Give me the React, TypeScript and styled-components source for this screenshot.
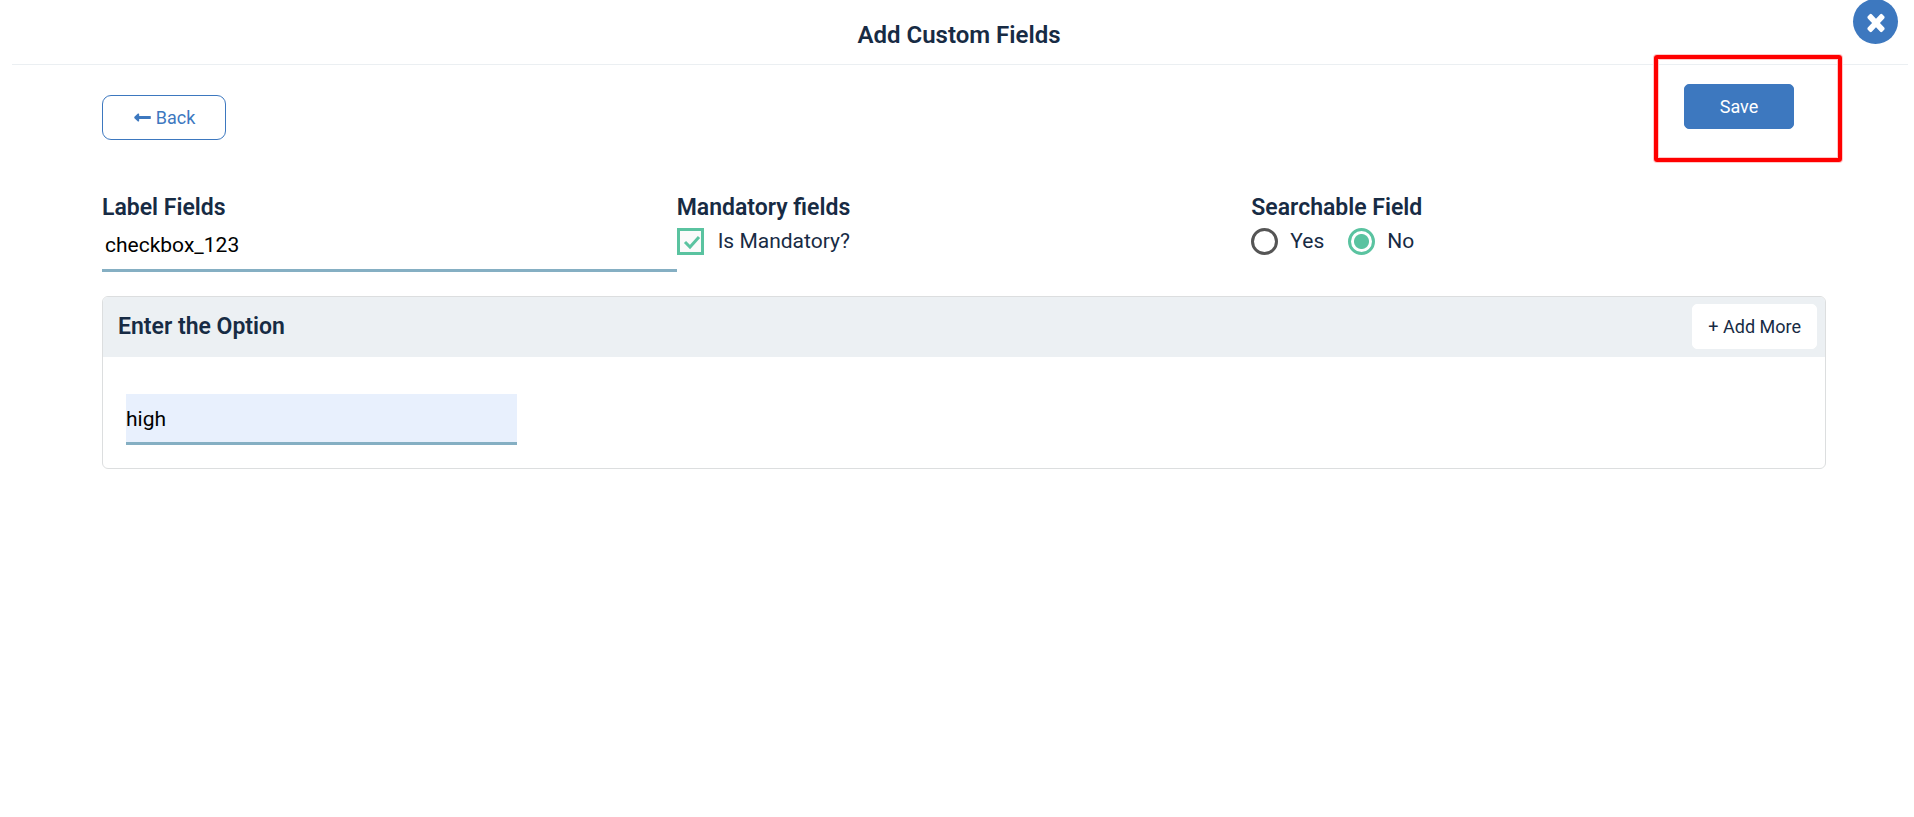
import React, { useState } from 'react';
import styled, { createGlobalStyle } from 'styled-components';
import { FaLongArrowAltLeft } from 'react-icons/fa';

const GlobalStyle = createGlobalStyle`
  * { box-sizing: border-box; }
  body {
    margin: 0;
    background: #fff;
    color: #172b44;
    font-family: Roboto, "Liberation Sans", sans-serif;
    font-size: 21px;
    font-weight: 400;
    line-height: 28px;
  }
  button, input { font-family: inherit; }
`;

const Page = styled.div`
  position: relative;
  padding: 0 6px 0 12px;
`;

const Header = styled.header`
  padding: 21px 2px 15px 0;
  border-bottom: 1px solid #ebeff2;
  text-align: center;
`;

const Title = styled.h1`
  margin: 0;
  font-size: 24px;
  font-weight: 600;
  line-height: 28px;
`;

const CloseButton = styled.button`
  position: absolute;
  top: -1px;
  right: 16px;
  display: flex;
  align-items: center;
  justify-content: center;
  width: 45px;
  height: 45px;
  padding: 0;
  border: 0;
  border-radius: 50%;
  background: #3d78bf;
  color: #fff;
`;

const Content = styled.main`
  padding: 19px 82px 0 90px;
`;

const Toolbar = styled.div`
  display: flex;
  align-items: flex-start;
  justify-content: space-between;
  padding-right: 32px;
`;

const Button = styled.button<{ $variant: 'primary' | 'outline' | 'plain' }>`
  display: inline-flex;
  align-items: center;
  justify-content: center;
  gap: 4px;
  height: 45px;
  padding: 0 15px;
  border: 1px solid ${p => (p.$variant === 'plain' ? '#fff' : '#3d78bf')};
  border-radius: ${p => (p.$variant === 'outline' ? 9 : 5)}px;
  background: ${p => (p.$variant === 'primary' ? '#3d78bf' : '#fff')};
  color: ${p => ({ primary: '#fff', outline: '#3d78bf', plain: '#172b44' })[p.$variant]};
  font-size: 18px;
  font-weight: 400;
  line-height: 24px;
`;

const BackButton = styled(Button)`
  min-width: 124px;
  margin-top: 11px;
`;

const SaveButton = styled(Button)`
  min-width: 110px;
`;

const Highlight = styled.div`
  position: relative;
  display: flex;

  &::after {
    content: '';
    position: absolute;
    inset: -29px -48px -33px -30px;
    border: 4px solid #f00;
    border-radius: 3px;
    box-shadow: 0 0 0 1px #ffc8c8, inset 0 0 0 1px #ffc8c8;
    pointer-events: none;
  }
`;

const Fields = styled.div`
  display: grid;
  grid-template-columns: repeat(3, 1fr);
  margin-top: 54px;
`;

const Group = styled.fieldset`
  min-width: 0;
  margin: 0;
  padding: 0;
  border: 0;
`;

const labelText = `
  display: block;
  padding: 0;
  font-size: 23px;
  font-weight: 600;
  line-height: 28px;
`;

const Label = styled.label`${labelText}`;
const Legend = styled.legend`${labelText}`;

const LineInput = styled.input`
  display: block;
  width: 100%;
  height: 50px;
  padding: 0 3px 2px;
  border: 0;
  border-bottom: 3px solid #85afc3;
  border-radius: 0;
  background: transparent;
  color: #000;
  font-size: 21px;
  font-weight: 400;
  outline: 0;
`;

const OptionInput = styled(LineInput)`
  width: 391px;
  height: 51px;
  padding: 1px 0 0;
  background: #e8f0fd;
`;

const Choices = styled.div`
  display: flex;
  gap: 24px;
  margin-top: 5px;
`;

const Choice = styled.label`
  display: flex;
  align-items: center;
  gap: 12px;
  line-height: 28px;
`;

const CheckboxChoice = styled(Choice)`
  gap: 14px;
`;

const Checkbox = styled.span`
  position: relative;
  display: flex;
  width: 27px;
  height: 27px;

  input {
    appearance: none;
    width: 27px;
    height: 27px;
    margin: 0;
    border: 3px solid #5ac3a0;
    background: #fafafa;
  }
  svg {
    position: absolute;
    inset: 0;
    pointer-events: none;
  }
  input:not(:checked) + svg { display: none; }
`;

const Radio = styled.input`
  appearance: none;
  width: 27px;
  height: 27px;
  margin: 0;
  border: 3px solid #555;
  border-radius: 50%;

  &:checked {
    border-color: #5ac3a0;
    background: radial-gradient(circle, #5ac3a0 7px, #fff 8px);
  }
`;

const Card = styled.section`
  margin-top: 24px;
  border: 1px solid #dcdedf;
  border-radius: 6px;
  overflow: hidden;
`;

const CardHeader = styled.div`
  display: flex;
  align-items: center;
  justify-content: space-between;
  padding: 7px 8px 8px 15px;
  background: #ecf0f3;
`;

const CardTitle = styled.h2`
  margin: 0;
  font-size: 23px;
  font-weight: 600;
  line-height: 28px;
`;

const CardBody = styled.div`
  padding: 37px 23px 23px;
`;

export default function App() {
  const [name, setName] = useState('checkbox_123');
  const [option, setOption] = useState('high');
  const [mandatory, setMandatory] = useState(true);
  const [searchable, setSearchable] = useState('No');

  return (
    <Page>
      <GlobalStyle />
      <Header>
        <Title>Add Custom Fields</Title>
        <CloseButton type="button" aria-label="Close">
          <svg width="26" height="28" viewBox="0 0 1792 1792" preserveAspectRatio="none" fill="currentColor" aria-hidden="true">
            <path d="M1490 1322q0 40-28 68l-136 136q-28 28-68 28t-68-28l-294-294-294 294q-28 28-68 28t-68-28l-136-136q-28-28-28-68t28-68l294-294-294-294q-28-28-28-68t28-68l136-136q28-28 68-28t68 28l294 294 294-294q28-28 68-28t68 28l136 136q28 28 28 68t-28 68l-294 294 294 294q28 28 28 68z" />
          </svg>
        </CloseButton>
      </Header>
      <Content>
        <Toolbar>
          <BackButton type="button" $variant="outline">
            <FaLongArrowAltLeft size={19} aria-hidden="true" />
            Back
          </BackButton>
          <Highlight>
            <SaveButton type="button" $variant="primary">Save</SaveButton>
          </Highlight>
        </Toolbar>
        <Fields>
          <div>
            <Label htmlFor="label-field">Label Fields</Label>
            <LineInput id="label-field" value={name} onChange={e => setName(e.target.value)} />
          </div>
          <Group>
            <Legend>Mandatory fields</Legend>
            <Choices>
              <CheckboxChoice>
                <Checkbox>
                  <input type="checkbox" checked={mandatory} onChange={e => setMandatory(e.target.checked)} />
                  <svg width="27" height="27" viewBox="0 0 27 27" fill="none" stroke="#5ac3a0" strokeWidth="3" aria-hidden="true">
                    <path d="M8 14l5 5 9-10" />
                  </svg>
                </Checkbox>
                Is Mandatory?
              </CheckboxChoice>
            </Choices>
          </Group>
          <Group>
            <Legend>Searchable Field</Legend>
            <Choices>
              {['Yes', 'No'].map(value => (
                <Choice key={value}>
                  <Radio
                    type="radio"
                    name="searchable"
                    value={value}
                    checked={searchable === value}
                    onChange={() => setSearchable(value)}
                  />
                  {value}
                </Choice>
              ))}
            </Choices>
          </Group>
        </Fields>
        <Card>
          <CardHeader>
            <CardTitle>Enter the Option</CardTitle>
            <Button type="button" $variant="plain">+ Add More</Button>
          </CardHeader>
          <CardBody>
            <OptionInput aria-label="Option" value={option} onChange={e => setOption(e.target.value)} />
          </CardBody>
        </Card>
      </Content>
    </Page>
  );
}
